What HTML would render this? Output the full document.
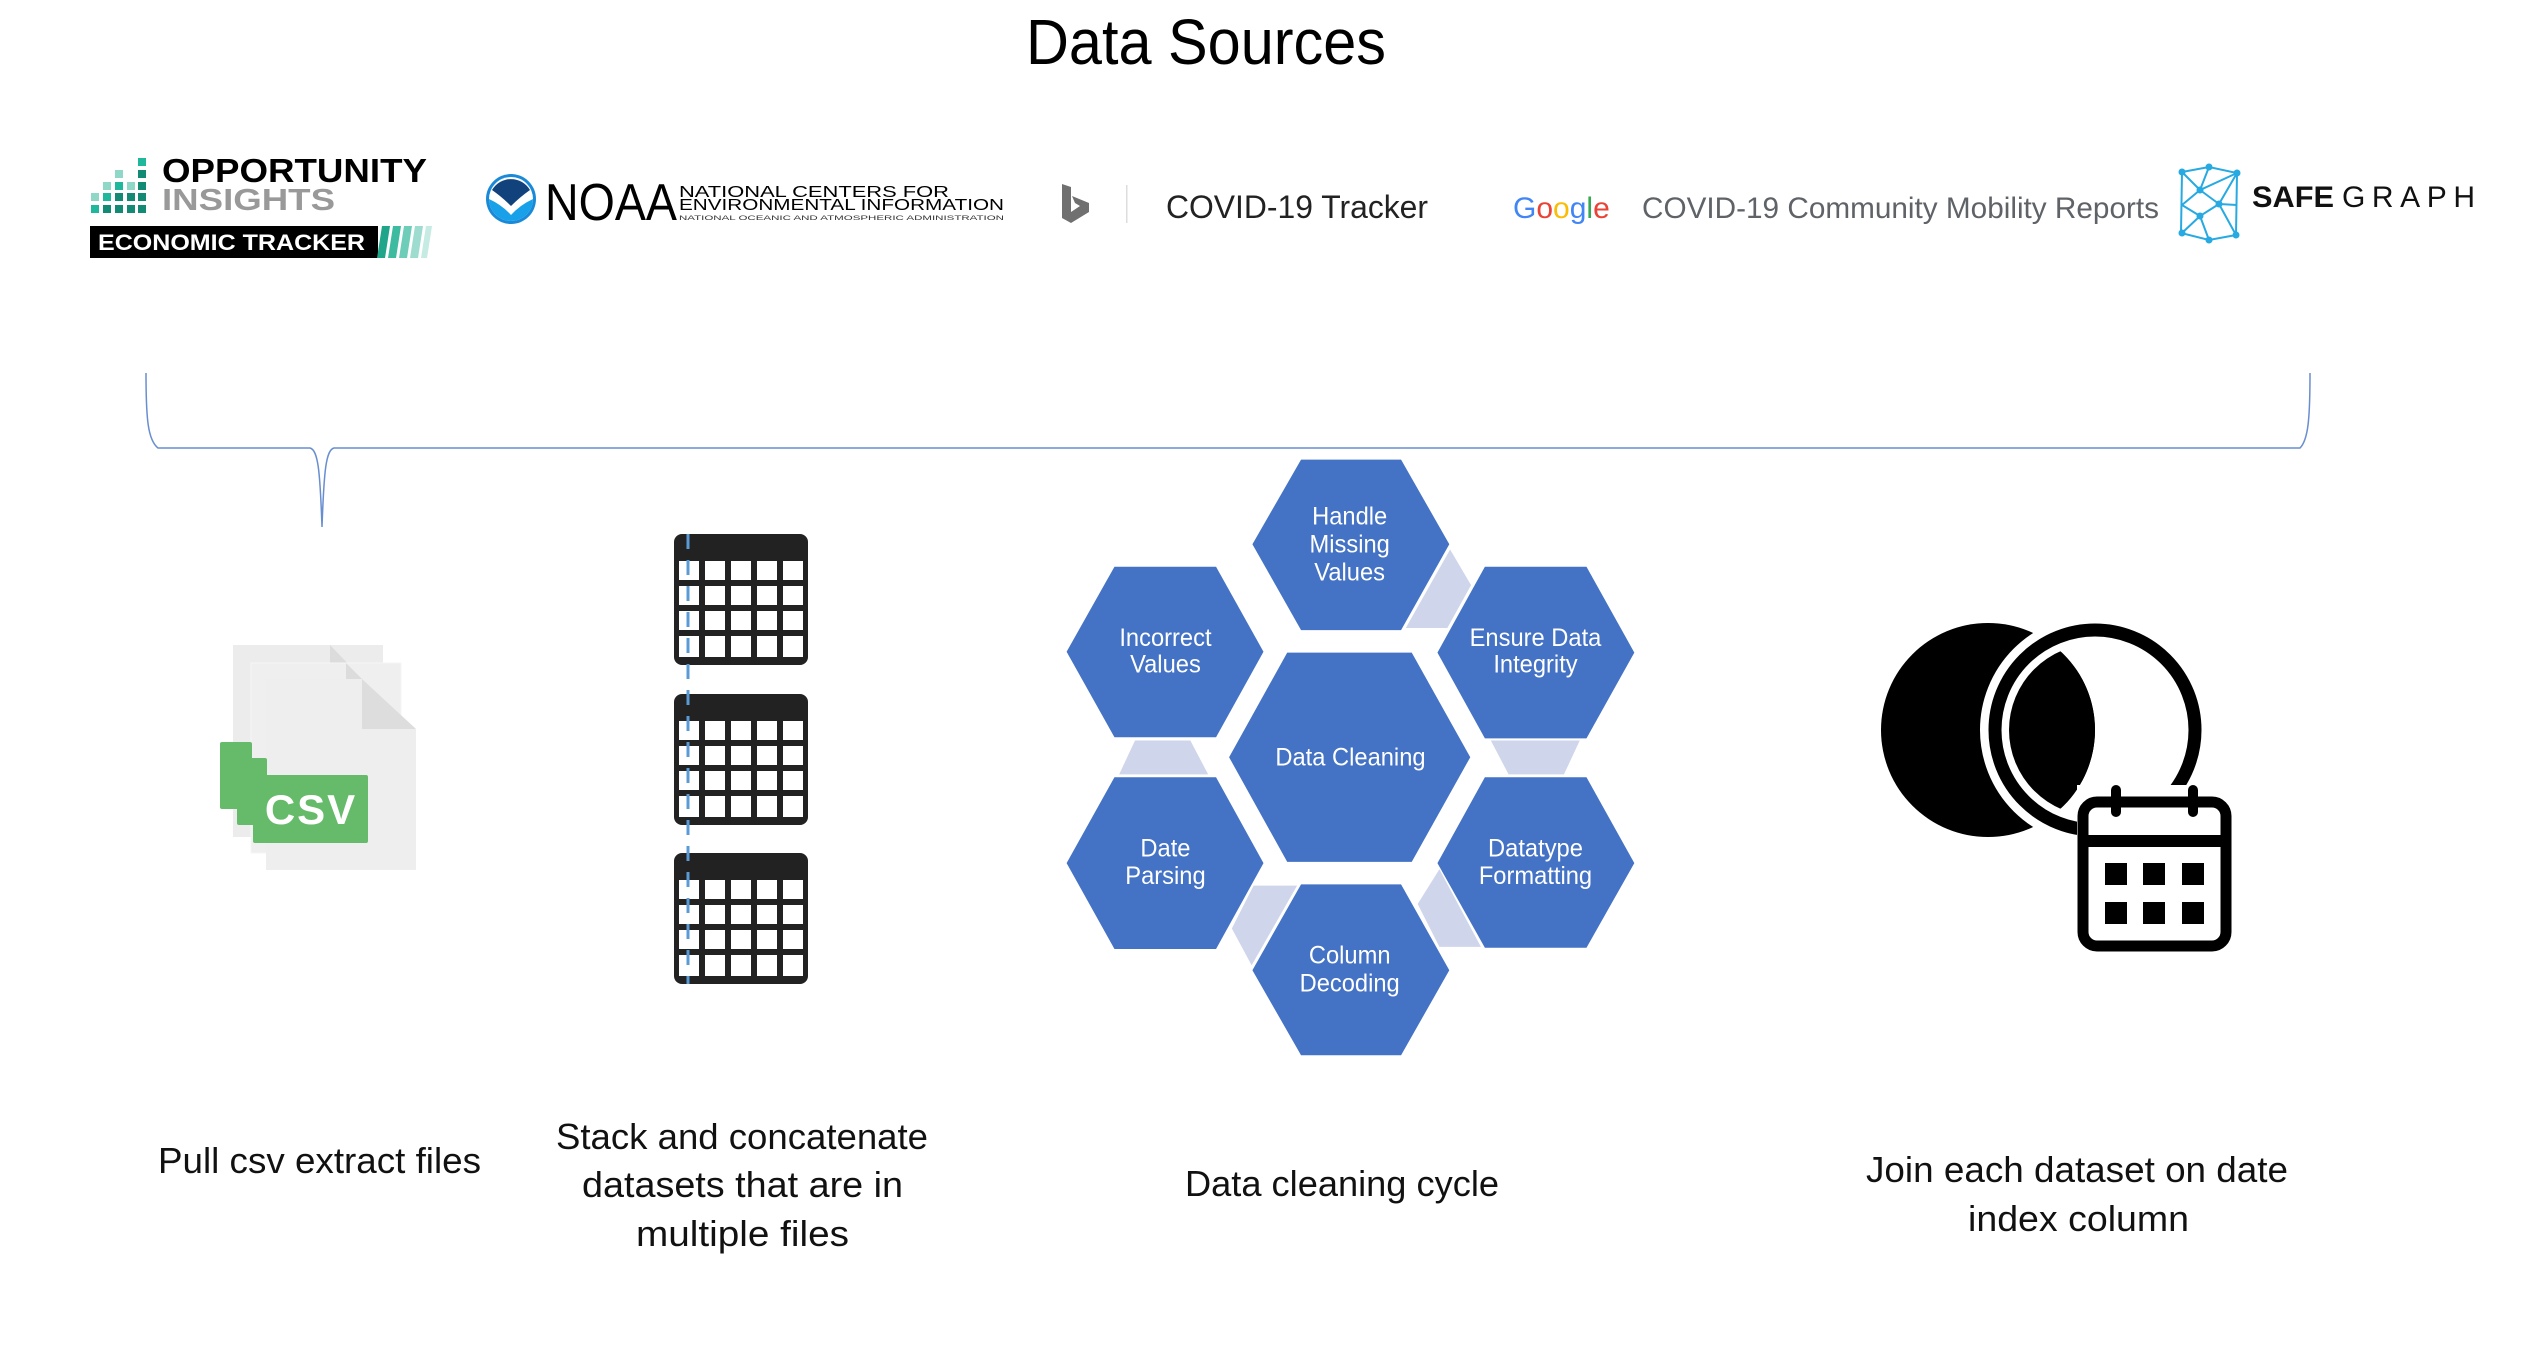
<!DOCTYPE html>
<html><head><meta charset="utf-8"><style>
html,body{margin:0;padding:0;background:#fff;}
body{width:2537px;height:1361px;overflow:hidden;position:relative;}
svg{position:absolute;left:0;top:0;}
</style></head><body>
<svg width="2537" height="1361" viewBox="0 0 2537 1361" xmlns="http://www.w3.org/2000/svg" font-family="Liberation Sans, sans-serif">
<text x="1026" y="64" font-size="64" textLength="360" lengthAdjust="spacingAndGlyphs" fill="#000">Data Sources</text>

<g>
<rect x="138" y="158" width="8" height="8" fill="#1fb89d"/>
<rect x="138" y="170" width="8" height="8" fill="#138a73"/>
<rect x="138" y="182" width="8" height="8" fill="#138a73"/>
<rect x="138" y="193" width="8" height="8" fill="#138a73"/>
<rect x="138" y="205" width="8" height="8" fill="#138a73"/>
<rect x="127" y="182" width="8" height="8" fill="#8fd8c8"/>
<rect x="127" y="193" width="8" height="8" fill="#138a73"/>
<rect x="127" y="205" width="8" height="8" fill="#138a73"/>
<rect x="115" y="170" width="8" height="8" fill="#8fd8c8"/>
<rect x="115" y="182" width="8" height="8" fill="#1fb89d"/>
<rect x="115" y="193" width="8" height="8" fill="#138a73"/>
<rect x="115" y="205" width="8" height="8" fill="#138a73"/>
<rect x="103" y="182" width="8" height="8" fill="#8fd8c8"/>
<rect x="103" y="193" width="8" height="8" fill="#1fb89d"/>
<rect x="103" y="205" width="8" height="8" fill="#138a73"/>
<rect x="91" y="193" width="8" height="8" fill="#8fd8c8"/>
<rect x="91" y="205" width="8" height="8" fill="#1fb89d"/>
</g>
<text x="162" y="182" font-size="33" font-weight="bold" textLength="265" lengthAdjust="spacingAndGlyphs" fill="#000">OPPORTUNITY</text>
<text x="162" y="210" font-size="31" font-weight="bold" textLength="173" lengthAdjust="spacingAndGlyphs" fill="#999">INSIGHTS</text>
<rect x="90" y="226" width="288" height="32" fill="#000"/>
<text x="98" y="250" font-size="22" font-weight="bold" textLength="267" lengthAdjust="spacingAndGlyphs" fill="#fff">ECONOMIC TRACKER</text>
<g>
<polygon points="382,226 390,226 385,258 377,258" fill="#1fa58a"/>
<polygon points="393,226 401,226 396,258 388,258" fill="#3dbba0"/>
<polygon points="404,226 412,226 407,258 399,258" fill="#6dcdb8"/>
<polygon points="415,226 423,226 418,258 410,258" fill="#9edccf"/>
<polygon points="426,226 432,226 427,258 421,258" fill="#c5ebe2"/>
</g>

<circle cx="511" cy="199" r="25" fill="#1a8ad8"/>
<circle cx="511" cy="199" r="22" fill="#fff"/>
<path d="M489,199 A22,22 0 0,0 533,199 Q520,205 511,215 Q502,205 489,199Z" fill="#18a0e8"/>
<path d="M492,190 A22,22 0 0,1 530,190 Q520,197 511,206 Q502,197 492,190Z" fill="#12427c"/>
<text x="545" y="220" font-size="52" textLength="132" lengthAdjust="spacingAndGlyphs" fill="#000">NOAA</text>
<text x="679" y="197" font-size="16" textLength="270" lengthAdjust="spacingAndGlyphs" fill="#000">NATIONAL CENTERS FOR</text>
<text x="679" y="210" font-size="16" textLength="325" lengthAdjust="spacingAndGlyphs" fill="#000">ENVIRONMENTAL INFORMATION</text>
<text x="679" y="220" font-size="6" textLength="325" lengthAdjust="spacingAndGlyphs" fill="#333">NATIONAL OCEANIC AND ATMOSPHERIC ADMINISTRATION</text>

<path d="M1062,184 L1071,187 L1071,212 L1080,206 L1075,203 L1072,196 L1089,203 L1089,212 L1071,223 L1062,218Z" fill="#707070"/>
<rect x="1126" y="185" width="1.5" height="38" fill="#ddd"/>
<text x="1166" y="218" font-size="32" textLength="262" lengthAdjust="spacingAndGlyphs" fill="#222">COVID-19 Tracker</text>

<text y="218" font-size="30" fill="#4285F4"><tspan x="1513">G</tspan><tspan fill="#EA4335">o</tspan><tspan fill="#FBBC05">o</tspan><tspan fill="#4285F4">g</tspan><tspan fill="#34A853">l</tspan><tspan fill="#EA4335">e</tspan></text>
<text x="1642" y="218" font-size="30" textLength="517" lengthAdjust="spacingAndGlyphs" fill="#5f6368">COVID-19 Community Mobility Reports</text>

<g stroke="#27a9e1" stroke-width="2" fill="none">
<path d="M2182,172 L2209,167 L2237,173 L2236,235 L2209,240 L2181,233Z"/>
<path d="M2182,172 L2200,190 L2237,173 M2200,190 L2219,204 L2200,216 L2209,240 M2200,216 L2182,233 M2219,204 L2237,205 M2209,167 L2200,190 M2182,205 L2200,190 M2182,205 L2200,216 M2219,204 L2236,235 M2219,204 L2237,173"/>
</g>
<g fill="#27a9e1">
<circle cx="2182" cy="172" r="3.5"/><circle cx="2209" cy="167" r="3.5"/><circle cx="2237" cy="173" r="3.5"/>
<circle cx="2200" cy="190" r="3.5"/><circle cx="2219" cy="204" r="3.5"/><circle cx="2200" cy="216" r="3.5"/>
<circle cx="2182" cy="233" r="3.5"/><circle cx="2209" cy="240" r="3.5"/><circle cx="2236" cy="235" r="3.5"/>
</g>
<text x="2252" y="207" font-size="30" font-weight="bold" textLength="82" lengthAdjust="spacingAndGlyphs" fill="#111">SAFE</text>
<text x="2342" y="207" font-size="30" textLength="141" lengthAdjust="spacing" fill="#111" letter-spacing="8">GRAPH</text>

<path d="M146,373 C146,420 148,440 158,448 L310,448 C318,450 320,470 322,527 C324,470 326,450 334,448 L2300,448 C2308,440 2310,420 2310,373" fill="none" stroke="#4472C4" stroke-width="1.5" opacity="0.8"/>

<rect x="233" y="645" width="150" height="192" fill="#ececec"/>
<polygon points="330,645 383,700 330,700" fill="#dcdcdc"/>
<rect x="251" y="663" width="150" height="190" fill="#efefef" stroke="#f6f6f6"/>
<polygon points="346,663 401,718 346,718" fill="#dcdcdc"/>
<polygon points="266,679 362,679 416,729 416,870 266,870" fill="#eeeeee"/>
<polygon points="362,679 416,729 362,729" fill="#dddddd"/>
<rect x="220" y="742" width="32" height="67" rx="2" fill="#66bb6a"/>
<rect x="237" y="758" width="30" height="67" rx="2" fill="#66bb6a"/>
<rect x="253" y="775" width="115" height="68" rx="2" fill="#66bb6a"/>
<text x="311" y="824" font-size="42" font-weight="bold" text-anchor="middle" fill="#fff" letter-spacing="2">CSV</text>

<defs>
<g id="tbl">
<rect x="0" y="0" width="134" height="131" rx="8" fill="#222"/>
<g fill="#fff">
<rect x="5" y="27" width="20" height="19"/><rect x="31" y="27" width="20" height="19"/><rect x="57" y="27" width="20" height="19"/><rect x="83" y="27" width="20" height="19"/><rect x="109" y="27" width="20" height="19"/>
<rect x="5" y="52" width="20" height="19"/><rect x="31" y="52" width="20" height="19"/><rect x="57" y="52" width="20" height="19"/><rect x="83" y="52" width="20" height="19"/><rect x="109" y="52" width="20" height="19"/>
<rect x="5" y="77" width="20" height="19"/><rect x="31" y="77" width="20" height="19"/><rect x="57" y="77" width="20" height="19"/><rect x="83" y="77" width="20" height="19"/><rect x="109" y="77" width="20" height="19"/>
<rect x="5" y="102" width="20" height="21"/><rect x="31" y="102" width="20" height="21"/><rect x="57" y="102" width="20" height="21"/><rect x="83" y="102" width="20" height="21"/><rect x="109" y="102" width="20" height="21"/>
</g>
</g>
</defs>
<use href="#tbl" x="674" y="534"/>
<use href="#tbl" x="674" y="694"/>
<use href="#tbl" x="674" y="853"/>
<line x1="688" y1="534" x2="688" y2="984" stroke="#5b9bd5" stroke-width="3" stroke-dasharray="15 11"/>

<g transform="translate(1050,440) scale(0.39535,0.4088)">
<g fill="#CFD5EA">
<polygon points="215,735 355,735 400,818 175,818"/>
<polygon points="1115,735 1340,735 1300,818 1160,818"/>
<polygon points="1012,268 1065,355 1005,460 900,460"/>
<polygon points="985,1050 1090,1240 985,1240 930,1135"/>
<polygon points="515,1090 625,1090 510,1285 460,1195"/>
</g>
<g fill="#4472C4">
<polygon points="512,255 635,48 888,48 1010,255 888,465 635,465"/>
<polygon points="42,518 163,310 420,310 540,518 420,727 163,727"/>
<polygon points="980,520 1100,310 1357,310 1478,520 1357,730 1100,730"/>
<polygon points="453,776 600,520 915,520 1063,776 915,1032 600,1032"/>
<polygon points="42,1035 163,825 420,825 540,1035 420,1245 163,1245"/>
<polygon points="980,1035 1100,825 1357,825 1478,1035 1357,1242 1100,1242"/>
<polygon points="512,1297 635,1087 888,1087 1010,1297 888,1505 635,1505"/>
</g>
<g fill="#fff" font-size="60" text-anchor="middle" dominant-baseline="central">
<text x="758" y="188">Handle</text><text x="758" y="256">Missing</text><text x="758" y="325">Values</text>
<text x="292" y="485">Incorrect</text><text x="292" y="550">Values</text>
<text x="1228" y="485">Ensure Data</text><text x="1228" y="550">Integrity</text>
<text x="760" y="778">Data Cleaning</text>
<text x="292" y="1000">Date</text><text x="292" y="1068">Parsing</text>
<text x="1228" y="1000">Datatype</text><text x="1228" y="1068">Formatting</text>
<text x="758" y="1262">Column</text><text x="758" y="1330">Decoding</text>
</g>
</g>

<defs><clipPath id="lc"><circle cx="1988" cy="730" r="107"/></clipPath></defs>
<circle cx="1988" cy="730" r="107" fill="#000"/>
<circle cx="2095" cy="730" r="100" fill="none" stroke="#fff" stroke-width="30"/>
<circle cx="2095" cy="730" r="86" fill="#000" clip-path="url(#lc)"/>
<circle cx="2095" cy="730" r="100" fill="none" stroke="#000" stroke-width="13"/>
<rect x="2077" y="785" width="160" height="170" fill="#fff"/>
<rect x="2083" y="802" width="143" height="144" rx="14" fill="#fff" stroke="#000" stroke-width="11"/>
<rect x="2083" y="835" width="143" height="12" fill="#000"/>
<rect x="2111" y="785" width="10" height="32" rx="5" fill="#000"/>
<rect x="2188" y="785" width="10" height="32" rx="5" fill="#000"/>
<g fill="#000">
<rect x="2105" y="863" width="22" height="22"/><rect x="2143" y="863" width="22" height="22"/><rect x="2182" y="863" width="22" height="22"/>
<rect x="2105" y="902" width="22" height="22"/><rect x="2143" y="902" width="22" height="22"/><rect x="2182" y="902" width="22" height="22"/>
</g>

<g font-size="36" fill="#111">
<text x="158" y="1173" textLength="323" lengthAdjust="spacingAndGlyphs">Pull csv extract files</text>
<text x="556" y="1149" textLength="372" lengthAdjust="spacingAndGlyphs">Stack and concatenate</text>
<text x="582" y="1197" textLength="321" lengthAdjust="spacingAndGlyphs">datasets that are in</text>
<text x="636" y="1246" textLength="213" lengthAdjust="spacingAndGlyphs">multiple files</text>
<text x="1185" y="1196" textLength="314" lengthAdjust="spacingAndGlyphs">Data cleaning cycle</text>
<text x="1866" y="1182" textLength="422" lengthAdjust="spacingAndGlyphs">Join each dataset on date</text>
<text x="1968" y="1231" textLength="221" lengthAdjust="spacingAndGlyphs">index column</text>
</g>
</svg>
</body></html>
